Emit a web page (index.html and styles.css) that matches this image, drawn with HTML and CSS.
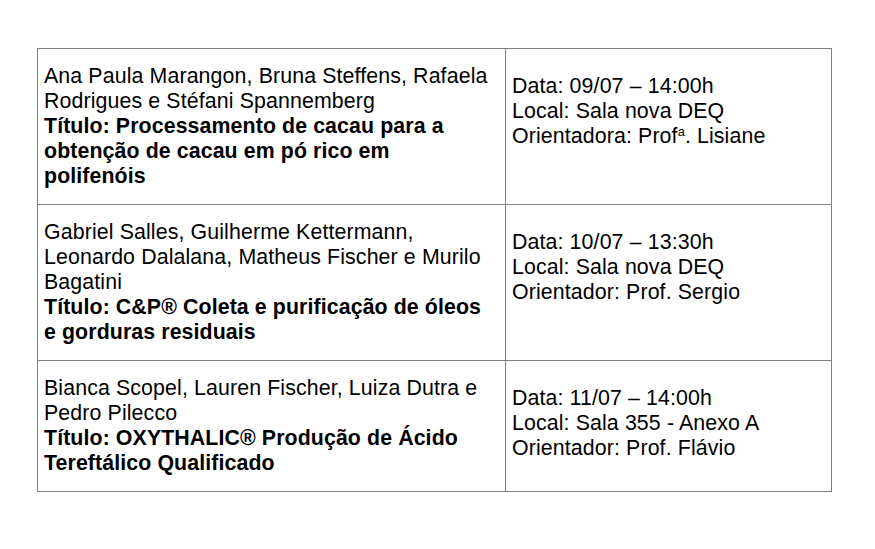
FILE: index.html
```html
<!DOCTYPE html>
<html lang="pt">
<head>
<meta charset="utf-8">
<title>Apresentações</title>
<link rel="stylesheet" href="styles.css">
</head>
<body>
<table class="schedule">
  <tr>
    <td class="who">
      <p>Ana Paula Marangon, Bruna Steffens, Rafaela Rodrigues e Stéfani Spannemberg</p>
      <p class="title">Título: Processamento de cacau para a obtenção de cacau em pó rico em polifenóis</p>
    </td>
    <td class="when">
      <p>Data: 09/07 – 14:00h</p>
      <p>Local: Sala nova DEQ</p>
      <p>Orientadora: Prof<sup>a</sup>. Lisiane</p>
    </td>
  </tr>
  <tr>
    <td class="who">
      <p>Gabriel Salles, Guilherme Kettermann, Leonardo Dalalana, Matheus Fischer e Murilo Bagatini</p>
      <p class="title">Título: C&amp;P® Coleta e purificação de óleos e gorduras residuais</p>
    </td>
    <td class="when">
      <p>Data: 10/07 – 13:30h</p>
      <p>Local: Sala nova DEQ</p>
      <p>Orientador: Prof. Sergio</p>
    </td>
  </tr>
  <tr>
    <td class="who">
      <p>Bianca Scopel, Lauren Fischer, Luiza Dutra e Pedro Pilecco</p>
      <p class="title">Título: OXYTHALIC® Produção de Ácido Tereftálico Qualificado</p>
    </td>
    <td class="when">
      <p>Data: 11/07 – 14:00h</p>
      <p>Local: Sala 355 - Anexo A</p>
      <p>Orientador: Prof. Flávio</p>
    </td>
  </tr>
</table>
</body>
</html>
```

FILE: styles.css
```css
html, body {
  margin: 0;
  padding: 0;
  background: #ffffff;
}

body {
  font-family: "Liberation Sans", Arial, sans-serif;
  font-size: 21.33px;
  line-height: 25px;
  letter-spacing: 0.12px;
  color: #000000;
}

.schedule {
  border-collapse: collapse;
  margin: 48px 0 0 37px;
  width: 795px;
  table-layout: fixed;
}

.schedule td {
  border: 1px solid #808080;
  vertical-align: top;
  padding: 15px 10px 15px 6px;
}

.schedule td.who {
  width: 451px;
}

.schedule td.when {
  padding-top: 25px;
}

.schedule p {
  margin: 0;
}

.schedule .title {
  font-weight: bold;
  letter-spacing: 0.1px;
}

.schedule sup {
  font-size: 0.6em;
  line-height: 0;
  vertical-align: 0.55em;
}
```
